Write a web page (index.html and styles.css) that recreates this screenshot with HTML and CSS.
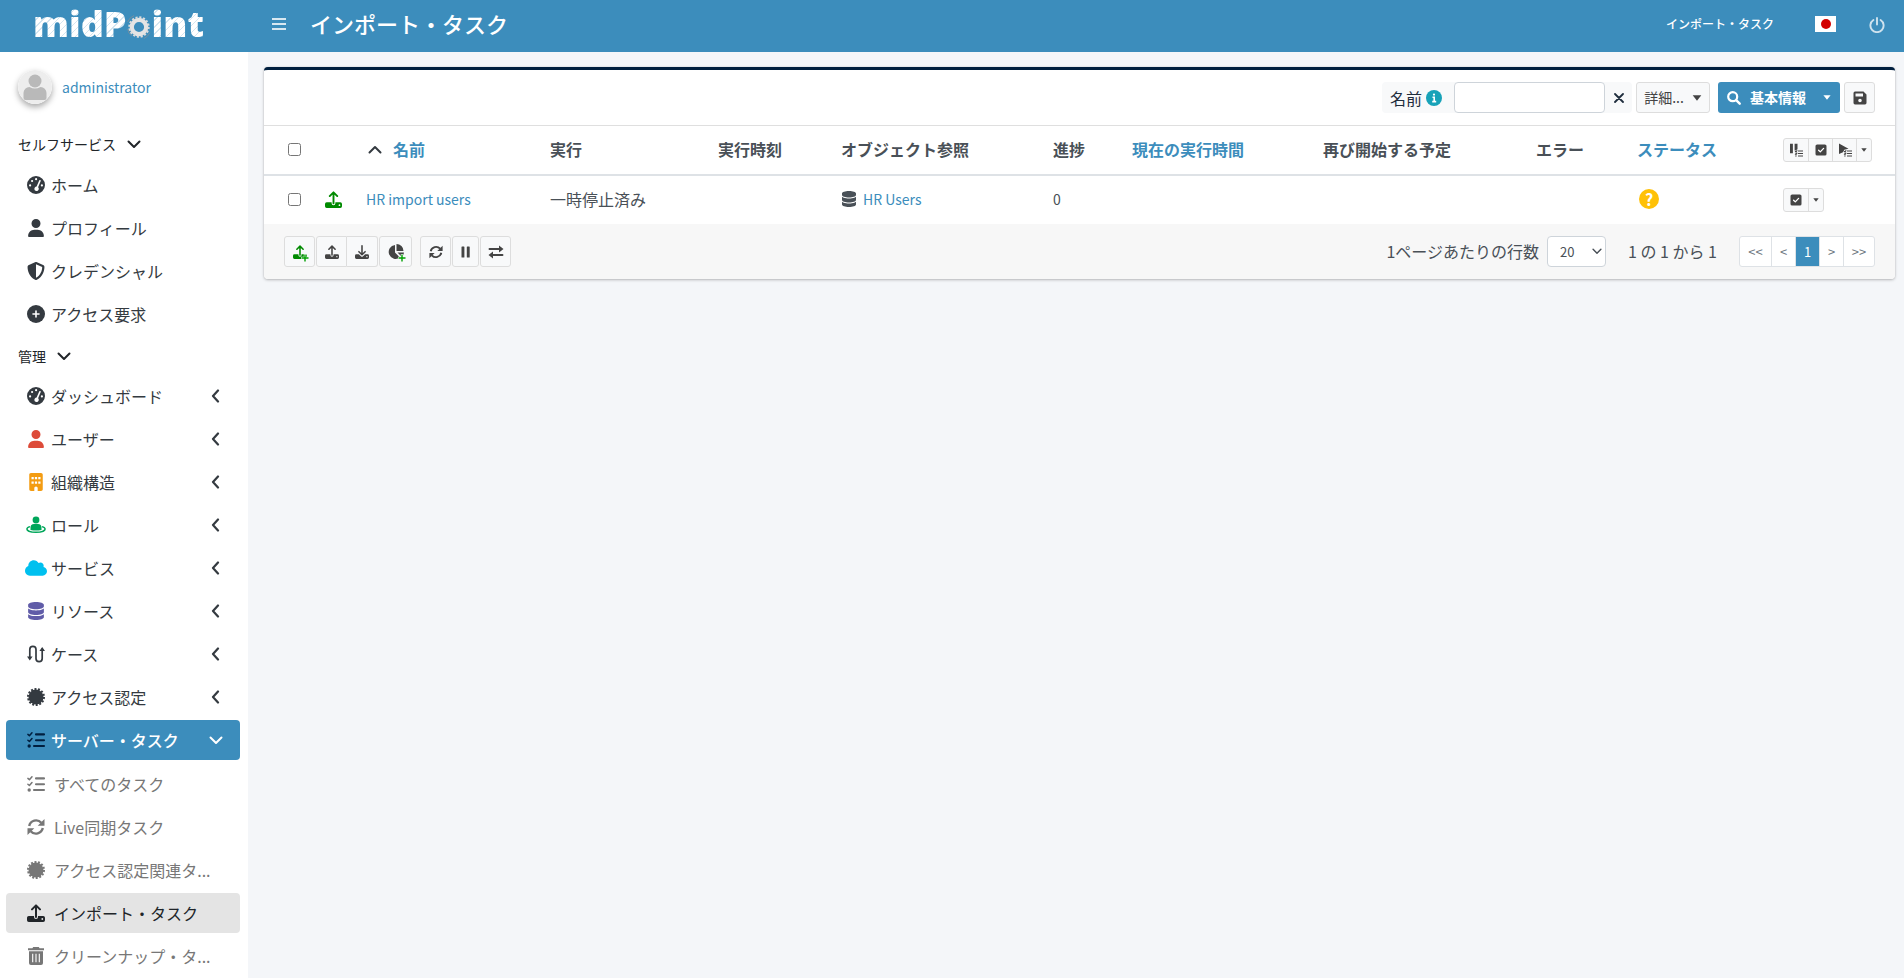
FILE: index.html
```html
<!DOCTYPE html>
<html lang="ja">
<head>
<meta charset="utf-8">
<title>インポート・タスク</title>
<link rel="stylesheet" href="styles.css">
</head>
<body>
<svg class="sprite" aria-hidden="true">
  <symbol id="i-gauge" viewBox="0 0 18 18"><path fill="currentColor" fill-rule="evenodd" d="M9 0a9 9 0 1 0 0 18a9 9 0 0 0 0-18zM8 3.2a1.1 1.1 0 1 0 2.2 0a1.1 1.1 0 1 0-2.2 0zM4 5a1.1 1.1 0 1 0 2.200 0a1.1 1.1 0 1 0-2.200 0zM2 9.400a1.1 1.1 0 1 0 2.200 0a1.1 1.1 0 1 0-2.200 0zM13.800 9.400a1.1 1.1 0 1 0 2.200 0a1.1 1.1 0 1 0-2.200 0zM12.300 4.200l-2.700 6.400a2.200 2.200 0 1 0 1.500 .6l2.600-6.300a.8 .8 0 0 0-1.400-.7z"/></symbol>
  <symbol id="i-user" viewBox="0 0 448 512"><path fill="currentColor" d="M224 256A128 128 0 1 0 224 0a128 128 0 1 0 0 256zm-45.700 48C79.800 304 0 383.800 0 482.300C0 498.700 13.300 512 29.700 512H418.300c16.400 0 29.700-13.300 29.700-29.700C448 383.800 368.200 304 269.700 304H178.300z"/></symbol>
  <symbol id="i-shield" viewBox="0 0 512 512"><path fill="currentColor" d="M256 0c4.600 0 9.200 1 13.400 2.900L457.700 82.800c22 9.300 38.400 31 38.300 57.200c-.5 99.200-41.300 280.700-213.600 363.200c-16.700 8-36.100 8-52.800 0C57.300 420.700 16.500 239.200 16 140c-.1-26.200 16.300-47.900 38.300-57.200L242.700 2.900C246.800 1 251.400 0 256 0zm0 66.800V444.800C394 378 431.100 230.100 432 141.400L256 66.800z"/></symbol>
  <symbol id="i-plus-circle" viewBox="0 0 18 18"><circle cx="9" cy="9" r="9" fill="currentColor"/><path stroke="#fff" stroke-width="1.600" stroke-linecap="round" d="M9 6v6M6 9h6"/></symbol>
  <symbol id="i-building" viewBox="0 0 384 512"><path fill="currentColor" fill-rule="evenodd" d="M48 0C21.500 0 0 21.500 0 48V464c0 26.500 21.500 48 48 48h96V432c0-26.500 21.500-48 48-48s48 21.500 48 48v80h96c26.500 0 48-21.500 48-48V48c0-26.500-21.500-48-48-48H48zM64 240h64v64H64zM160 240h64v64h-64zM256 240h64v64h-64zM64 112h64v64H64zM160 112h64v64h-64zM256 112h64v64h-64z"/></symbol>
  <symbol id="i-role" viewBox="0 0 20 18"><circle cx="10" cy="4" r="3.400" fill="currentColor"/><path fill="currentColor" d="M4.500 14v-2.500a3.500 3.500 0 0 1 3.500-3.500h4a3.500 3.500 0 0 1 3.500 3.500V14q-5.500 1-11 0z"/><path fill="none" stroke="currentColor" stroke-width="1.500" d="M4 10.600C2 11.200.9 12 .9 13c0 1.900 4 3.300 9.100 3.300s9.100-1.400 9.100-3.300c0-1-1.100-1.800-3.100-2.400"/></symbol>
  <symbol id="i-cloud" viewBox="0 32 640 448"><path fill="currentColor" d="M0 336c0 79.500 64.500 144 144 144H512c70.700 0 128-57.300 128-128c0-61.900-44-113.600-102.400-125.400c4.100-10.700 6.400-22.400 6.400-34.600c0-53-43-96-96-96c-19.700 0-38.100 6-53.300 16.200C367 64.200 315.300 32 256 32C167.600 32 96 103.600 96 192c0 2.700 .1 5.400 .2 8.100C40.200 219.800 0 273.200 0 336z"/></symbol>
  <symbol id="i-db" viewBox="0 0 448 512"><path fill="currentColor" d="M448 80v48c0 44.200-100.300 80-224 80S0 172.200 0 128V80C0 35.800 100.300 0 224 0S448 35.800 448 80zM393.200 214.700c20.800-7.400 39.900-16.900 54.800-28.600V288c0 44.200-100.300 80-224 80S0 332.200 0 288V186.100c14.900 11.800 34 21.200 54.800 28.600C99.700 230.700 159.500 240 224 240s124.300-9.300 169.200-25.300zM0 346.100c14.900 11.800 34 21.200 54.800 28.600C99.700 390.700 159.500 400 224 400s124.300-9.300 169.200-25.300c20.800-7.400 39.900-16.900 54.800-28.600V432c0 44.200-100.300 80-224 80S0 476.200 0 432V346.100z"/></symbol>
  <symbol id="i-case" viewBox="0 0 18 18"><path fill="none" stroke="currentColor" stroke-width="1.700" stroke-linecap="round" d="M2.800 13V4.500a3.100 3.100 0 0 1 6.200 0v9a3.100 3.100 0 0 0 6.200 0V4"/><path fill="currentColor" d="M0 11.500h5.600L2.800 15.500zM12.400 6H18L15.200 2z"/></symbol>
  <symbol id="i-cert" viewBox="0 0 18 18"><circle cx="9" cy="9" r="7.500" fill="currentColor"/><circle cx="9" cy="9" r="8" fill="none" stroke="currentColor" stroke-width="2" stroke-dasharray="2 1.590"/></symbol>
  <symbol id="i-tasks" viewBox="0 0 18 18"><path fill="none" stroke="currentColor" stroke-width="1.500" stroke-linecap="round" stroke-linejoin="round" d="M.9 3.400l1.500 1.300L5 1.700M.9 9.200l1.500 1.300L5 7.500"/><path stroke="currentColor" stroke-width="2.100" stroke-linecap="round" d="M9 3.400h8M9 9.200h8M7 15h10"/><circle cx="2.200" cy="15" r="1.700" fill="currentColor"/></symbol>
  <symbol id="i-sync" viewBox="0 0 18 18"><path fill="none" stroke="currentColor" stroke-width="2.400" d="M2.200 8A7 7 0 0 1 14.300 4.800M15.800 10A7 7 0 0 1 3.700 13.200"/><path fill="currentColor" d="M17.500 1v6.800h-6.800zM.5 17v-6.800h6.800z"/></symbol>
  <symbol id="i-upload" viewBox="0 0 18 18"><path fill="none" stroke="currentColor" stroke-width="2" stroke-linecap="round" stroke-linejoin="round" d="M9 13V1.600M5 5.400l4-4 4 4"/><path fill="currentColor" fill-rule="evenodd" d="M1.800 12H7v1a2 2 0 0 0 4 0v-1h5.200a1.800 1.800 0 0 1 1.800 1.800v2.400a1.800 1.800 0 0 1-1.800 1.800H1.800A1.800 1.800 0 0 1 0 16.200v-2.400A1.800 1.800 0 0 1 1.800 12zM14.400 15a.9 .9 0 1 0 1.800 0a.9 .9 0 1 0-1.800 0z"/></symbol>
  <symbol id="i-download" viewBox="0 0 18 18"><path fill="none" stroke="currentColor" stroke-width="2" stroke-linecap="round" stroke-linejoin="round" d="M9 1v11.400M5 8.600l4 4 4-4"/><path fill="currentColor" fill-rule="evenodd" d="M1.800 12H5l3 2.800q1 .8 2 0L13 12h3.200a1.800 1.800 0 0 1 1.800 1.800v2.400a1.800 1.800 0 0 1-1.800 1.800H1.800A1.800 1.800 0 0 1 0 16.200v-2.400A1.800 1.800 0 0 1 1.800 12zM14.400 15a.9 .9 0 1 0 1.800 0a.9 .9 0 1 0-1.800 0z"/></symbol>
  <symbol id="i-trash" viewBox="0 0 16 18"><path fill="currentColor" d="M5.200 0h5.600l.8 1.200H16v2H0v-2h4.400z"/><path fill="currentColor" d="M1 4.300h14V16a2 2 0 0 1-2 2H3a2 2 0 0 1-2-2z"/><path stroke="#fff" stroke-width="1.100" d="M4.700 6.800v8.400M8 6.800v8.400M11.300 6.800v8.400"/></symbol>
  <symbol id="i-down" viewBox="0 0 14 9"><path fill="none" stroke="currentColor" stroke-width="2" stroke-linecap="round" stroke-linejoin="round" d="M1.500 1.500L7 7l5.500-5.500"/></symbol>
  <symbol id="i-up" viewBox="0 0 14 9"><path fill="none" stroke="currentColor" stroke-width="2" stroke-linecap="round" stroke-linejoin="round" d="M1.500 7.500L7 2l5.500 5.500"/></symbol>
  <symbol id="i-left" viewBox="0 0 9 14"><path fill="none" stroke="currentColor" stroke-width="2.200" stroke-linecap="round" stroke-linejoin="round" d="M7 1.500L2 7l5 5.500"/></symbol>
  <symbol id="i-bars" viewBox="0 0 14 14"><path stroke="currentColor" stroke-width="1.800" d="M0 2h14M0 7h14M0 12h14"/></symbol>
  <symbol id="i-power" viewBox="0 0 16 16"><path fill="none" stroke="currentColor" stroke-width="1.900" stroke-linecap="round" d="M8 1v6.500M4.400 3A6.600 6.600 0 1 0 11.600 3"/></symbol>
  <symbol id="i-info" viewBox="0 0 16 16"><circle cx="8" cy="8" r="8" fill="currentColor"/><path fill="none" stroke="#fff" stroke-width="1.600" d="M6.500 7.200h1.700v4.200M6.200 11.600h4"/><circle cx="8" cy="4.600" r="1.100" fill="#fff"/></symbol>
  <symbol id="i-x" viewBox="0 0 10 10"><path stroke="currentColor" stroke-width="1.800" stroke-linecap="round" d="M1 1l8 8M9 1L1 9"/></symbol>
  <symbol id="i-search" viewBox="0 0 14 14"><circle cx="5.700" cy="5.700" r="4.500" fill="none" stroke="currentColor" stroke-width="2.200"/><path stroke="currentColor" stroke-width="2.400" stroke-linecap="round" d="M9.400 9.400l3.300 3.300"/></symbol>
  <symbol id="i-save" viewBox="0 0 14 14"><path fill="currentColor" fill-rule="evenodd" d="M2 .5h8.500L13.500 3.500V12A1.600 1.600 0 0 1 12 13.500H2A1.600 1.600 0 0 1 .5 12V2A1.600 1.600 0 0 1 2 .5zM2.500 2.500v3h7.500v-3zM5.200 9.500a1.800 1.800 0 1 0 3.600 0a1.800 1.800 0 1 0-3.600 0z"/></symbol>
  <symbol id="i-caret" viewBox="0 0 8 5"><path fill="currentColor" d="M.4 .3h7.200L4 4.700z"/></symbol>
  <symbol id="i-check" viewBox="0 0 12 12"><rect x=".5" y=".5" width="11" height="11" rx="1.600" fill="currentColor"/><path fill="none" stroke="#fff" stroke-width="1.300" stroke-linecap="round" stroke-linejoin="round" d="M3.600 6.200l1.700 1.700L8.600 4.400"/></symbol>
  <symbol id="i-pause" viewBox="0 0 10 12"><path fill="currentColor" d="M.5 1.200a.6 .6 0 0 1 .6-.7h1.700a.6 .6 0 0 1 .6 .7v9.600a.6 .6 0 0 1-.6 .7H1.100a.6 .6 0 0 1-.6-.7zM5.800 1.200a.6 .6 0 0 1 .6-.7h1.700a.6 .6 0 0 1 .6 .7v9.600a.6 .6 0 0 1-.6 .7H6.400a.6 .6 0 0 1-.6-.7z"/></symbol>
  <symbol id="i-pause-list" viewBox="0 0 14 14"><path fill="currentColor" d="M1 .8h2.900v9.400H1zM5.600 .8H8.500v5.400L6.500 7.500H5.600z"/><path stroke="currentColor" stroke-width="1.100" d="M9 8h5M9 10.500h5M9 13h5M6 8.300l1 .6 1.200-1.700M6 10.800l1 .6 1.200-1.700M6.200 13h1.400" fill="none"/></symbol>
  <symbol id="i-play-list" viewBox="0 0 14 14"><path fill="currentColor" d="M1 .5l9.500 5.300-4.200 1L5 9.300 1 11z"/><path stroke="currentColor" stroke-width="1.100" d="M9 8h5M9 10.500h5M9 13h5M6 8.300l1 .6 1.200-1.700M6 10.800l1 .6 1.200-1.700M6.200 13h1.400" fill="none"/></symbol>
  <symbol id="i-pie" viewBox="0 0 16 16"><path fill="currentColor" d="M7 1v7.500l5 5A7 7 0 1 1 7 1zM8.500 0A7 7 0 0 1 15.500 7H8.500zM9.500 8.500H16A7 7 0 0 1 13.800 13z"/></symbol>
  <symbol id="i-swap" viewBox="0 0 16 14"><path fill="none" stroke="currentColor" stroke-width="1.900" stroke-linecap="round" d="M1.500 4H12M4 10h10.500"/><path fill="currentColor" d="M11 .5L15.500 4L11 7.500zM5 6.500L.5 10L5 13.500z"/></symbol>
  <symbol id="i-plus" viewBox="0 0 8 8"><path stroke="#f8f9fa" stroke-width="2.400" d="M4 0v8M0 4h8"/><path stroke="#00a000" stroke-width="1.400" d="M4 .5v7M.5 4h7"/></symbol>
</svg>

<header class="topbar">
  <a class="brand" href="#" aria-label="midPoint"><span class="brand-text">midP</span><svg class="gear" viewBox="0 0 24 24"><circle cx="12" cy="12" r="7.200" fill="none" stroke="#e4e4e4" stroke-width="4.200"/><circle cx="12" cy="12" r="9.700" fill="none" stroke="#dcdcdc" stroke-width="2" stroke-dasharray="2.100 1.710"/><path fill="none" stroke="#8a8f94" stroke-width=".7" d="M.5 7A12.500 12.500 0 0 1 7 .5M17 23.500a12.500 12.500 0 0 0 6-6M.6 14a11.500 11.500 0 0 0 4 7"/></svg><span class="brand-text">int</span></a>
  <button class="menu-toggle" type="button" aria-label="メニュー"><svg class="s14"><use href="#i-bars"/></svg></button>
  <h1 class="title">インポート・タスク</h1>
  <a class="crumb" href="#">インポート・タスク</a>
  <button class="flag" type="button" aria-label="日本語"><span class="sun"></span></button>
  <a class="power" href="#" aria-label="ログアウト"><svg class="s16"><use href="#i-power"/></svg></a>
</header>

<div class="body">
  <aside class="sidebar">
    <div class="user">
      <svg class="avatar" viewBox="0 0 34 34" aria-hidden="true"><circle cx="17" cy="17" r="17" fill="#ededed"/><circle cx="17" cy="11" r="6.500" fill="#b9b9b9"/><path fill="#b9b9b9" d="M5.500 28v-5a6 6 0 0 1 6-6q5.500 3 11 0a6 6 0 0 1 6 6v5a2 2 0 0 1-2 2h-19a2 2 0 0 1-2-2z"/></svg>
      <a href="#">administrator</a>
    </div>
    <nav>
      <button class="section" type="button">セルフサービス <svg class="down"><use href="#i-down"/></svg></button>
      <a class="item" href="#"><svg class="ico"><use href="#i-gauge"/></svg><span>ホーム</span></a>
      <a class="item" href="#"><svg class="ico"><use href="#i-user"/></svg><span>プロフィール</span></a>
      <a class="item" href="#"><svg class="ico"><use href="#i-shield"/></svg><span>クレデンシャル</span></a>
      <a class="item" href="#"><svg class="ico"><use href="#i-plus-circle"/></svg><span>アクセス要求</span></a>
      <button class="section second" type="button">管理 <svg class="down"><use href="#i-down"/></svg></button>
      <a class="item" href="#"><svg class="ico"><use href="#i-gauge"/></svg><span>ダッシュボード</span><svg class="left"><use href="#i-left"/></svg></a>
      <a class="item" href="#"><svg class="ico red"><use href="#i-user"/></svg><span>ユーザー</span><svg class="left"><use href="#i-left"/></svg></a>
      <a class="item" href="#"><svg class="ico orange"><use href="#i-building"/></svg><span>組織構造</span><svg class="left"><use href="#i-left"/></svg></a>
      <a class="item" href="#"><svg class="ico green"><use href="#i-role"/></svg><span>ロール</span><svg class="left"><use href="#i-left"/></svg></a>
      <a class="item" href="#"><svg class="ico wide aqua"><use href="#i-cloud"/></svg><span>サービス</span><svg class="left"><use href="#i-left"/></svg></a>
      <a class="item" href="#"><svg class="ico purple"><use href="#i-db"/></svg><span>リソース</span><svg class="left"><use href="#i-left"/></svg></a>
      <a class="item" href="#"><svg class="ico"><use href="#i-case"/></svg><span>ケース</span><svg class="left"><use href="#i-left"/></svg></a>
      <a class="item" href="#"><svg class="ico"><use href="#i-cert"/></svg><span>アクセス認定</span><svg class="left"><use href="#i-left"/></svg></a>
      <a class="item active" href="#"><svg class="ico navy"><use href="#i-tasks"/></svg><span>サーバー・タスク</span><svg class="down"><use href="#i-down"/></svg></a>
      <div class="sub">
        <a class="item" href="#"><svg class="ico"><use href="#i-tasks"/></svg><span>すべてのタスク</span></a>
        <a class="item" href="#"><svg class="ico"><use href="#i-sync"/></svg><span>Live同期タスク</span></a>
        <a class="item" href="#"><svg class="ico"><use href="#i-cert"/></svg><span>アクセス認定関連タ...</span></a>
        <a class="item current" href="#"><svg class="ico"><use href="#i-upload"/></svg><span>インポート・タスク</span></a>
        <a class="item" href="#"><svg class="ico"><use href="#i-trash"/></svg><span>クリーンナップ・タ...</span></a>
      </div>
    </nav>
  </aside>

  <main class="content">
    <section class="card">
      <form class="search">
        <div class="field">
          <label for="q">名前 <svg class="s16 teal"><use href="#i-info"/></svg></label>
          <input id="q" type="text">
          <button class="clear" type="button" aria-label="削除"><svg class="s10"><use href="#i-x"/></svg></button>
        </div>
        <button class="btn more" type="button"><span>詳細...</span> <svg class="caret big"><use href="#i-caret"/></svg></button>
        <div class="primary">
          <button type="button" class="basic"><svg class="s14"><use href="#i-search"/></svg><span>基本情報</span></button><button type="button" class="drop" aria-label="検索モード"><svg class="caret"><use href="#i-caret"/></svg></button>
        </div>
        <button class="btn square" type="button" aria-label="保存"><svg class="s14"><use href="#i-save"/></svg></button>
      </form>

      <table class="grid">
        <colgroup><col class="c-check"><col class="c-icon"><col class="c-name"><col class="c-exec"><col class="c-time"><col class="c-obj"><col class="c-prog"><col class="c-now"><col class="c-next"><col class="c-err"><col class="c-stat"><col class="c-act"></colgroup>
        <thead>
          <tr>
            <th><input type="checkbox" aria-label="すべて選択"></th>
            <th></th>
            <th><span class="sort"><svg class="down dark"><use href="#i-up"/></svg><a href="#">名前</a></span></th>
            <th>実行</th><th>実行時刻</th><th>オブジェクト参照</th><th>進捗</th>
            <th><a href="#">現在の実行時間</a></th><th>再び開始する予定</th><th>エラー</th><th><a href="#">ステータス</a></th>
            <th><div class="mini"><button type="button" aria-label="一時停止"><svg class="s14"><use href="#i-pause-list"/></svg></button><button type="button" aria-label="選択"><svg class="s12"><use href="#i-check"/></svg></button><button type="button" aria-label="再開"><svg class="s14"><use href="#i-play-list"/></svg></button><button class="mini-drop" type="button" aria-label="その他"><svg class="caret tiny"><use href="#i-caret"/></svg></button></div></th>
          </tr>
        </thead>
        <tbody>
          <tr>
            <td><input type="checkbox" aria-label="HR import usersを選択"></td>
            <td><svg class="s17 leaf"><use href="#i-upload"/></svg></td>
            <td><span class="ref"><a class="latin" href="#">HR import users</a></span></td>
            <td>一時停止済み</td><td></td>
            <td><span class="ref"><svg class="s16"><use href="#i-db"/></svg><a class="latin" href="#">HR Users</a></span></td>
            <td class="latin">0</td><td></td><td></td><td></td>
            <td><span class="unknown" title="不明">?</span></td>
            <td><div class="mini"><button type="button" aria-label="選択"><svg class="s12"><use href="#i-check"/></svg></button><button class="mini-drop" type="button" aria-label="その他"><svg class="caret tiny"><use href="#i-caret"/></svg></button></div></td>
          </tr>
        </tbody>
      </table>

      <footer class="foot">
        <div class="tools">
          <button class="btn square leaf" type="button" aria-label="新規インポート"><svg class="s14"><use href="#i-upload"/></svg><svg class="plus"><use href="#i-plus"/></svg></button>
          <div class="pair"><button class="btn square" type="button" aria-label="インポート"><svg class="s14"><use href="#i-upload"/></svg></button><button class="btn square" type="button" aria-label="エクスポート"><svg class="s14"><use href="#i-download"/></svg></button></div>
          <button class="btn pie" type="button" aria-label="レポート作成"><svg class="s16"><use href="#i-pie"/></svg><svg class="plus"><use href="#i-plus"/></svg></button>
        </div>
        <div class="tools">
          <button class="btn square" type="button" aria-label="更新"><svg class="s14"><use href="#i-sync"/></svg></button>
          <button class="btn narrow" type="button" aria-label="一時停止"><svg class="s12"><use href="#i-pause"/></svg></button>
          <button class="btn square" type="button" aria-label="切替"><svg class="s16"><use href="#i-swap"/></svg></button>
        </div>
        <div class="paging">
          <label for="rows">1ページあたりの行数</label>
          <span class="select"><select id="rows"><option>20</option></select><svg class="down"><use href="#i-down"/></svg></span>
          <span class="count">1 の 1 から 1</span>
          <nav class="pages"><a class="end" href="#">&lt;&lt;</a><a href="#">&lt;</a><a class="on" href="#">1</a><a href="#">&gt;</a><a class="end" href="#">&gt;&gt;</a></nav>
        </div>
      </footer>
    </section>
  </main>
</div>
</body>
</html>
```
FILE: styles.css
```css
* { box-sizing: border-box; }
body {
  margin: 0;
  min-height: 100vh;
  display: flex;
  flex-direction: column;
  background: #f4f6f9;
  color: #495057;
  font-family: "Noto Sans CJK JP", "Noto Sans", sans-serif;
  font-size: 16px;
  line-height: 24px;
}
a { color: #3c8dbc; text-decoration: none; }
button, input, select { font: inherit; color: inherit; margin: 0; }
button { cursor: pointer; border: 0; background: none; padding: 0; }
svg { display: block; flex: none; }
.sprite { position: absolute; width: 0; height: 0; }
.s10 { width: 10px; height: 10px; }
.s12 { width: 12px; height: 12px; }
.s14 { width: 14px; height: 14px; }
.s16 { width: 16px; height: 16px; }
.s17 { width: 17px; height: 17px; }
.down { width: 14px; height: 9px; }
.left { width: 9px; height: 14px; }
.caret { width: 8px; height: 5px; }
.caret.big { width: 10px; height: 6px; }
.caret.tiny { width: 6px; height: 4px; }
.dark { color: #343a40; }
.red { color: #dd4b39; }
.orange { color: #f39c12; }
.green { color: #00a65a; }
.aqua { color: #00c0ef; }
.purple { color: #605ca8; }
.navy { color: #001f3f; }
.teal { color: #17a2b8; }

/* Top bar */
.topbar {
  display: flex;
  align-items: center;
  height: 52px;
  padding-right: 19px;
  background: #3c8dbc;
  color: #fff;
}
.topbar a, .topbar button { color: #fff; }
.brand {
  display: flex;
  align-items: center;
  width: 248px;
  height: 52px;
  padding: 0 0 4px 33px;
}
.brand .brand-text {
  font: 800 36px/44px "Open Sans", sans-serif;
  color: transparent;
  background: repeating-linear-gradient(135deg, #fff 0 4px, #d3e5f0 4px 5px);
  background-clip: text;
  -webkit-background-clip: text;
}
.gear { width: 24px; height: 24px; margin: 6px 1px 0 0; }
.menu-toggle { margin: 0 24px; opacity: .8; }
.menu-toggle svg { margin-top: -4px; }
.title { margin: 0 auto 0 0; font-size: 22px; font-weight: 500; line-height: 28px; padding-bottom: 6px; }
.crumb { font-size: 12px; font-weight: 500; padding-bottom: 4px; }
.flag {
  display: grid;
  place-items: center;
  width: 21px;
  height: 16px;
  margin: 0 33px 4px 41px;
  background: #fff;
}
.sun { width: 10px; height: 10px; border-radius: 50%; background: #d30000; }
.power { opacity: .75; padding-bottom: 3px; }

.body { display: flex; flex: 1; }

/* Sidebar */
.sidebar { width: 248px; height: calc(100vh - 52px); overflow: hidden; padding: 17px 8px 0 6px; background: #fff; flex: none; }
.user { display: flex; align-items: center; gap: 10px; height: 35px; padding-left: 12px; font-size: 14px; }
.avatar { width: 34px; height: 34px; border-radius: 50%; box-shadow: 0 3px 6px rgba(0, 0, 0, .35); }
.section { display: flex; align-items: center; gap: 11px; height: 24px; margin: 28px 0 9px 12px; font-size: 14px; color: #212529; }
.section.second { margin-top: 10px; margin-bottom: 8px; }
.item {
  display: flex;
  align-items: center;
  gap: 5px;
  height: 40px;
  margin-bottom: 3px;
  padding: 0 20px;
  border-radius: 4px;
  color: #343a40;
}
.item span { flex: 1; min-width: 0; white-space: nowrap; padding-bottom: 1px; }
.ico { width: 20px; height: 18px; }
.ico.wide { width: 22px; height: 16px; margin: 0 -1px; }
.item.active { background: #3c8dbc; color: #fff; font-weight: 500; padding-right: 17px; }
.sub { padding-top: 1px; }
.sub .item { gap: 8px; color: #777; }
.sub .item.current { background: #e4e4e4; color: #212529; }

/* Card */
.content { flex: 1; min-width: 0; padding: 15px 9px 15px 16px; }
.card {
  background: #fff;
  border-top: 3px solid #001f3f;
  border-radius: 4px;
  box-shadow: 0 0 1px rgba(0, 0, 0, .2), 0 1px 3px rgba(0, 0, 0, .25);
  overflow: hidden;
}
.search { display: flex; justify-content: flex-end; gap: 4px; padding: 12px 20px; border-bottom: 1px solid #dfdfdf; }
.field { display: flex; background: #f8f9fa; border-radius: 4px; color: #1f2d3d; height: 31px; }
.field label { display: flex; align-items: center; gap: 4px; padding: 0 12px 0 8px; }
.field input { width: 151px; border: 1px solid #ced4da; border-radius: 4px; background: #fff; padding: 0 8px; }
.clear { width: 27px; display: grid; place-items: center; }
.btn {
  position: relative;
  display: flex;
  align-items: center;
  justify-content: center;
  gap: 8px;
  height: 31px;
  border: 1px solid #ddd;
  border-radius: 3px;
  background: #f8f9fa;
  color: #444;
  font-size: 14px;
}
.btn span, .basic span { padding-bottom: 2px; }
.square { width: 31px; }
.narrow { width: 27px; }
.pie { width: 33px; }
.more { width: 74px; margin-right: 4px; }
.primary { display: flex; width: 122px; height: 31px; border-radius: 3px; background: #3c8dbc; color: #fff; }
.basic { flex: 1; display: flex; align-items: center; gap: 9px; padding-left: 9px; font-size: 14px; font-weight: 700; }
.drop { width: 27px; display: grid; place-items: center; }

.grid { width: 100%; table-layout: fixed; border-collapse: separate; border-spacing: 0; }
.c-check { width: 49px; } .c-icon { width: 41px; } .c-name { width: 184px; } .c-exec { width: 168px; }
.c-time { width: 123px; } .c-obj { width: 212px; } .c-prog { width: 79px; } .c-now { width: 191px; }
.c-next { width: 213px; } .c-err { width: 101px; } .c-stat { width: 146px; } .c-act { width: 124px; }
.grid th, .grid td { height: 48px; padding: 0 0 2px 12px; text-align: left; vertical-align: middle; white-space: nowrap; }
.grid th { border-bottom: 2px solid #dee2e6; font-weight: 700; height: 50px; }
.grid th:first-child, .grid td:first-child { padding-left: 24px; }
.grid input { display: block; width: 13px; height: 13px; }
.grid .latin { font-size: 14px; }
.sort { display: flex; align-items: center; gap: 11px; padding-left: 2px; }
.ref { display: flex; align-items: center; gap: 6px; }
.leaf, .btn.leaf { color: #008a00; }
.unknown { display: grid; place-items: center; width: 20px; height: 20px; margin-left: 2px; border-radius: 50%; background: #ffc107; color: #fff; font-size: 16px; font-weight: 700; line-height: 20px; }
.mini { display: inline-flex; vertical-align: middle; border: 1px solid #ddd; border-radius: 3px; background: #f8f9fa; color: #444; height: 24px; }
.mini button { width: 24px; display: grid; place-items: center; }
.mini button + button { border-left: 1px solid #ddd; }
.mini .mini-drop { width: 15px; }

.foot { display: flex; align-items: center; gap: 8px; padding: 12px 20px; background: #f7f7f7; }
.tools { display: flex; gap: 1px; }
.pair { display: flex; }
.pair .btn:first-child { border-radius: 3px 0 0 3px; }
.pair .btn + .btn { border-left: 0; border-radius: 0 3px 3px 0; }
.plus { position: absolute; right: 5px; bottom: 4px; width: 8px; height: 8px; }
.paging { display: flex; align-items: center; margin-left: auto; }
.paging label, .count { padding-bottom: 1px; }
.select { position: relative; margin-left: 8px; }
.select select { display: block; appearance: none; width: 59px; height: 31px; padding: 0 12px; font-size: 13px; border: 1px solid #ced4da; border-radius: 4px; background: #fff; }
.select svg { position: absolute; right: 4px; top: 12px; width: 10px; height: 7px; pointer-events: none; }
.count { margin: 0 22px; }
.pages { display: flex; height: 31px; border: 1px solid #dee2e6; border-radius: 3px; background: #fff; overflow: hidden; font-size: 13px; line-height: 29px; }
.pages a { width: 24px; text-align: center; color: #6c757d; }
.pages a + a { border-left: 1px solid #dee2e6; }
.pages .end { width: 31px; }
.pages .on { background: #3c8dbc; color: #fff; }
```
